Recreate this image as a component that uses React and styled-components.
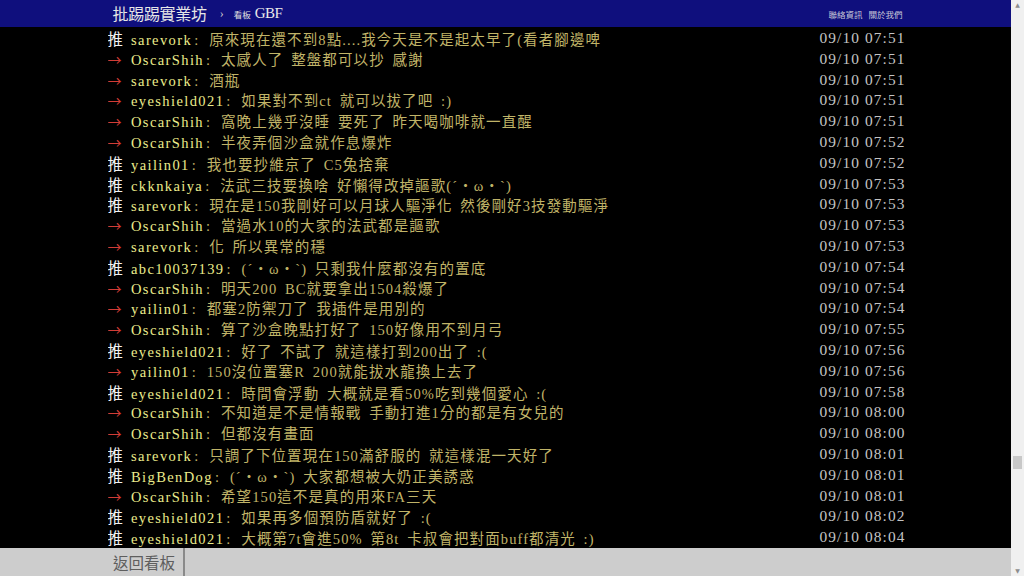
import React from "react";
import styled, { createGlobalStyle } from "styled-components";

const Global = createGlobalStyle`
  html, body { margin: 0; padding: 0; background: #000; overflow: hidden; }
  #root { width: 1024px; height: 576px; }
`;

const Shell = styled.div`
  display: flex;
  width: 1024px;
  height: 576px;
`;

const Page = styled.div`
  flex: 1;
  display: flex;
  flex-direction: column;
  min-width: 0;
  background: #000;
`;

const TopBar = styled.div`
  height: 27px;
  flex: none;
  background: #0f0f7d;
`;

const Inner = styled.div`
  width: 800px;
  margin: 0 auto;
  height: 100%;
  box-sizing: border-box;
  display: flex;
  align-items: center;
  padding: ${(p) => p.$pad || "0"};
`;

const Brand = styled.span`
  font-family: "Liberation Serif", "Noto Sans CJK TC", serif;
  font-size: 16px;
  color: #e6e6e6;
  letter-spacing: -0.3px;
  margin-top: -2px;
`;

const Crumb = styled.span`
  font-family: "Liberation Serif", serif;
  font-size: 12px;
  color: #cfcfcf;
  margin: 0 10px 0 13px;
`;

const BoardLabel = styled.span`
  font-family: "Noto Sans CJK TC", sans-serif;
  font-size: 8.5px;
  color: #e0e0e0;
  margin-top: 1px;
  margin-right: 4px;
`;

const BoardName = styled.span`
  font-family: "Liberation Serif", serif;
  font-size: 15px;
  color: #eaeaea;
  margin-top: -1px;
  letter-spacing: -0.5px;
`;

const Links = styled.div`
  margin-left: auto;
  display: flex;
  gap: 6px;
  padding-right: 3px;
`;

const LinkText = styled.span`
  font-family: "Noto Sans CJK TC", sans-serif;
  font-size: 8.5px;
  color: #c8c8d8;
`;

const Screen = styled.div`
  flex: 1;
  padding-top: 1px;
  overflow: hidden;
`;

const List = styled.div`
  width: 800px;
  margin: 0 auto;
  padding-left: 2px;
  box-sizing: border-box;
`;

const Row = styled.div`
  display: flex;
  height: 20.8px;
  line-height: 20.8px;
  font-family: "Liberation Serif", "Noto Sans CJK TC", serif;
  white-space: nowrap;
`;

const Msg = styled.div`
  flex: 1;
  min-width: 0;
  overflow: hidden;
  font-size: 14.5px;
  letter-spacing: 1.1px;
  word-spacing: 3px;
`;

const Tag = styled.span`
  display: inline-block;
  width: 23.5px;
  letter-spacing: 0;
  font-family: "Noto Sans CJK TC", sans-serif;
  color: ${(p) => (p.$arrow ? "#d23c36" : "#f2f2f2")};
  font-size: ${(p) => (p.$arrow ? "14px" : "15.4px")};
`;

const User = styled.span`
  color: #ecec8c;
  letter-spacing: 1.4px;
`;

const Sep = styled.span`
  display: inline-block;
  width: 17px;
  padding-left: 2px;
  box-sizing: border-box;
  color: #c0b468;
`;

const Content = styled.span`
  color: #c0b468;
`;

const Time = styled.span`
  flex: none;
  font-size: 15.4px;
  color: #c4c4c4;
  letter-spacing: 1.1px;
`;

const Footer = styled.div`
  height: 28px;
  flex: none;
  background: #cdcdcd;
`;

const BackButton = styled.span`
  font-family: "Noto Sans CJK TC", sans-serif;
  font-size: 15.5px;
  color: #5e5e5e;
  height: 100%;
  display: flex;
  align-items: center;
  padding: 0 8px 0 7.5px;
  border-right: 2px solid #8a8a8a;
`;

const ScrollBar = styled.div`
  width: 13px;
  flex: none;
  background: #f0f0f0;
  position: relative;
  display: flex;
  flex-direction: column;
  justify-content: space-between;
  align-items: center;
`;

const Arrow = styled.span`
  font-size: 6px;
  color: #8d8d8d;
  line-height: 10px;
  font-family: "DejaVu Sans", sans-serif;
`;

const Thumb = styled.div`
  position: absolute;
  left: 2px;
  width: 9px;
  top: 456px;
  height: 13px;
  background: #c8c8c8;
`;

const pushes = [
  ["推", "sarevork", "原來現在還不到8點....我今天是不是起太早了(看者腳邊啤", "07:51"],
  ["→", "OscarShih", "太感人了 整盤都可以抄 感謝", "07:51"],
  ["→", "sarevork", "酒瓶", "07:51"],
  ["→", "eyeshield021", "如果對不到ct 就可以拔了吧 :)", "07:51"],
  ["→", "OscarShih", "窩晚上幾乎沒睡 要死了 昨天喝咖啡就一直醒", "07:51"],
  ["→", "OscarShih", "半夜弄個沙盒就作息爆炸", "07:52"],
  ["推", "yailin01", "我也要抄維京了 C5兔捨棄", "07:52"],
  ["推", "ckknkaiya", "法武三技要換啥 好懶得改掉謳歌(ˊ・ω・ˋ)", "07:53"],
  ["推", "sarevork", "現在是150我剛好可以月球人驅淨化 然後剛好3技發動驅淨", "07:53"],
  ["→", "OscarShih", "當過水10的大家的法武都是謳歌", "07:53"],
  ["→", "sarevork", "化 所以異常的穩", "07:53"],
  ["推", "abc10037139", "(ˊ・ω・ˋ) 只剩我什麼都沒有的置底", "07:54"],
  ["→", "OscarShih", "明天200 BC就要拿出1504殺爆了", "07:54"],
  ["→", "yailin01", "都塞2防禦刀了 我插件是用別的", "07:54"],
  ["→", "OscarShih", "算了沙盒晚點打好了 150好像用不到月弓", "07:55"],
  ["推", "eyeshield021", "好了 不試了 就這樣打到200出了 :(", "07:56"],
  ["→", "yailin01", "150沒位置塞R  200就能拔水龍換上去了", "07:56"],
  ["推", "eyeshield021", "時間會浮動 大概就是看50%吃到幾個愛心 :(", "07:58"],
  ["→", "OscarShih", "不知道是不是情報戰 手動打進1分的都是有女兒的", "08:00"],
  ["→", "OscarShih", "但都沒有畫面", "08:00"],
  ["推", "sarevork", "只調了下位置現在150滿舒服的 就這樣混一天好了", "08:01"],
  ["推", "BigBenDog", "(ˊ・ω・`) 大家都想被大奶正美誘惑", "08:01"],
  ["→", "OscarShih", "希望150這不是真的用來FA三天", "08:01"],
  ["推", "eyeshield021", "如果再多個預防盾就好了 :(", "08:02"],
  ["推", "eyeshield021", "大概第7t會進50% 第8t 卡叔會把對面buff都清光 :)", "08:04"],
];

export default function App() {
  return (
    <>
      <Global />
      <Shell>
        <Page>
          <TopBar>
            <Inner $pad="0 0 0 7px">
              <Brand>批踢踢實業坊</Brand>
              <Crumb>›</Crumb>
              <BoardLabel>看板</BoardLabel>
              <BoardName>GBF</BoardName>
              <Links>
                <LinkText>聯絡資訊</LinkText>
                <LinkText>關於我們</LinkText>
              </Links>
            </Inner>
          </TopBar>
          <Screen>
            <List>
              {pushes.map(([tag, user, text, time], i) => (
                <Row key={i}>
                  <Msg>
                    <Tag $arrow={tag === "→"}>{tag}</Tag>
                    <User>{user}</User>
                    <Sep>:</Sep>
                    <Content>{text}</Content>
                  </Msg>
                  <Time>09/10 {time}</Time>
                </Row>
              ))}
            </List>
          </Screen>
          <Footer>
            <Inner>
              <BackButton>返回看板</BackButton>
            </Inner>
          </Footer>
        </Page>
        <ScrollBar>
          <Arrow>▲</Arrow>
          <Thumb />
          <Arrow>▼</Arrow>
        </ScrollBar>
      </Shell>
    </>
  );
}
